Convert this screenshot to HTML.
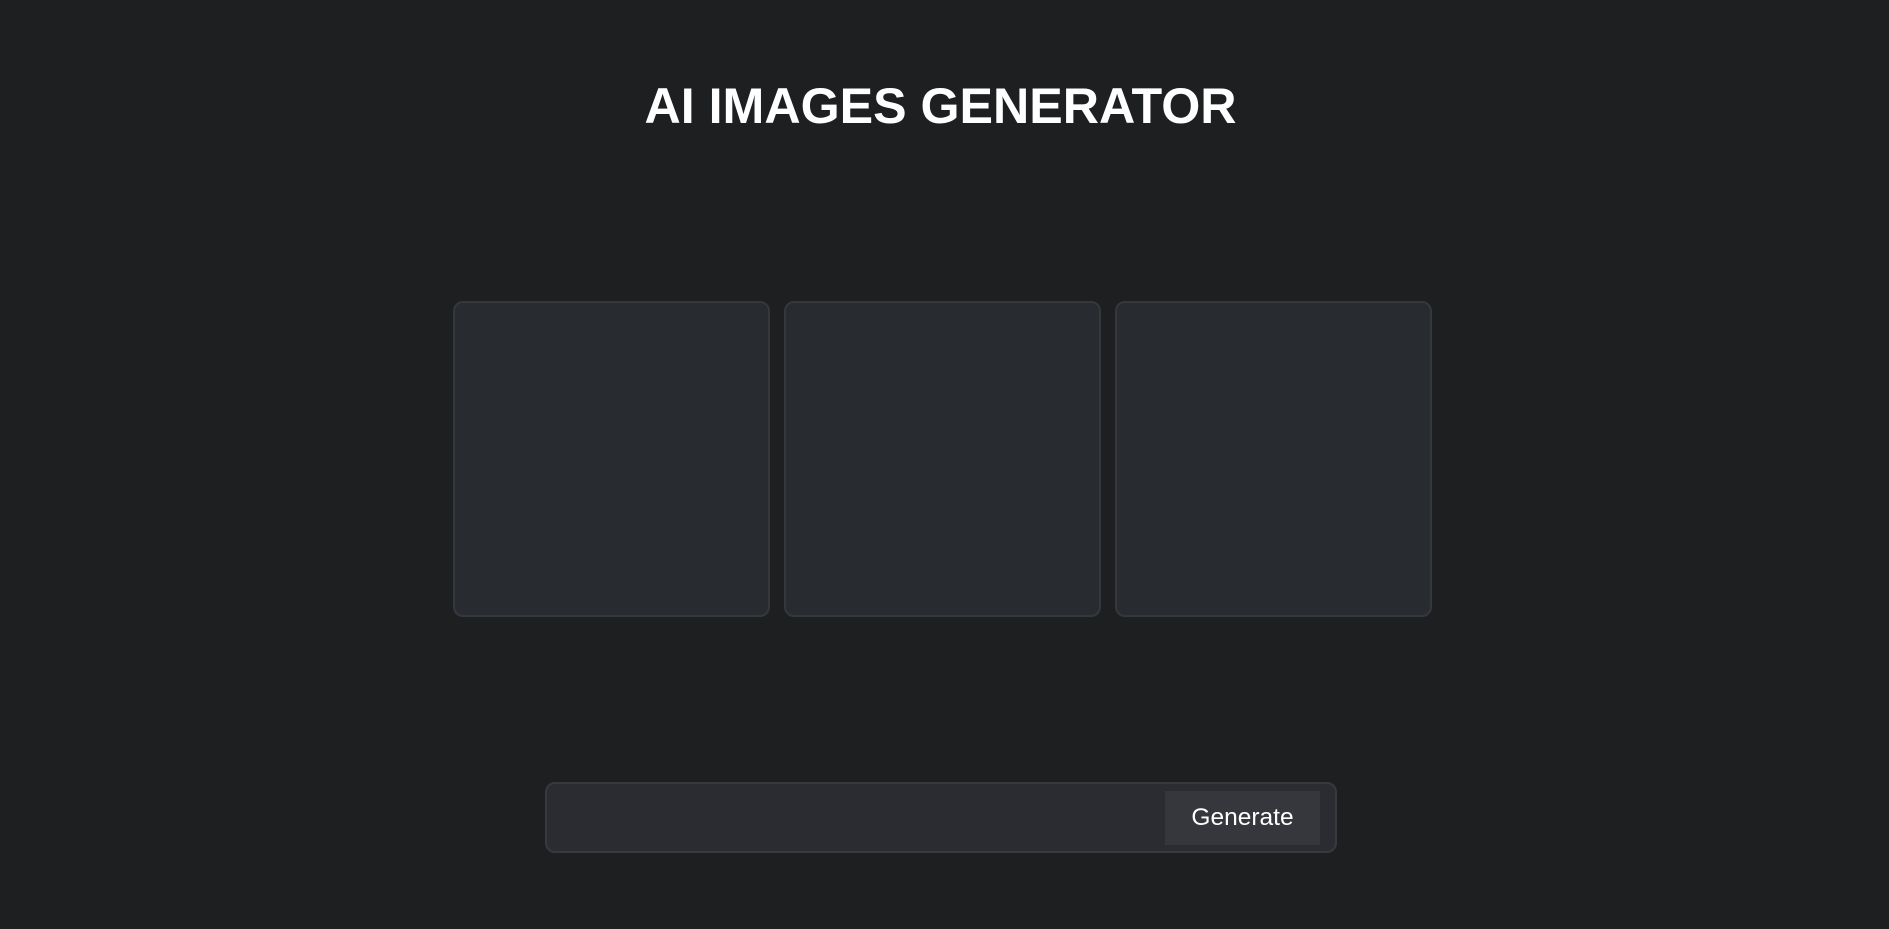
<!DOCTYPE html>
<html><head><style>
html,body{margin:0;padding:0;}
body{width:1889px;height:929px;background:#1d1f21;font-family:"Liberation Sans",Arial,sans-serif;position:relative;overflow:hidden;}
h1{position:absolute;left:-8px;right:0;top:76px;margin:0;text-align:center;color:#fff;font-size:50.2px;font-weight:bold;line-height:60px;}
.cards{position:absolute;top:301px;left:-5px;right:0;display:flex;justify-content:center;gap:14px;}
.card{width:313px;height:312px;background:#282b30;border:2px solid #34373c;border-radius:10px;}
.bar{position:absolute;left:545px;top:782px;width:788px;height:67px;background:#2a2c31;border:2px solid #37393e;border-radius:10px;}
.btn{position:absolute;left:618px;top:7px;width:155px;height:54px;background:#36373c;color:#fff;font-size:24.5px;display:flex;align-items:center;justify-content:center;}
</style></head><body>
<h1>AI IMAGES GENERATOR</h1>
<div class="cards"><div class="card"></div><div class="card"></div><div class="card"></div></div>
<div class="bar"><div class="btn">Generate</div></div>
</body></html>
